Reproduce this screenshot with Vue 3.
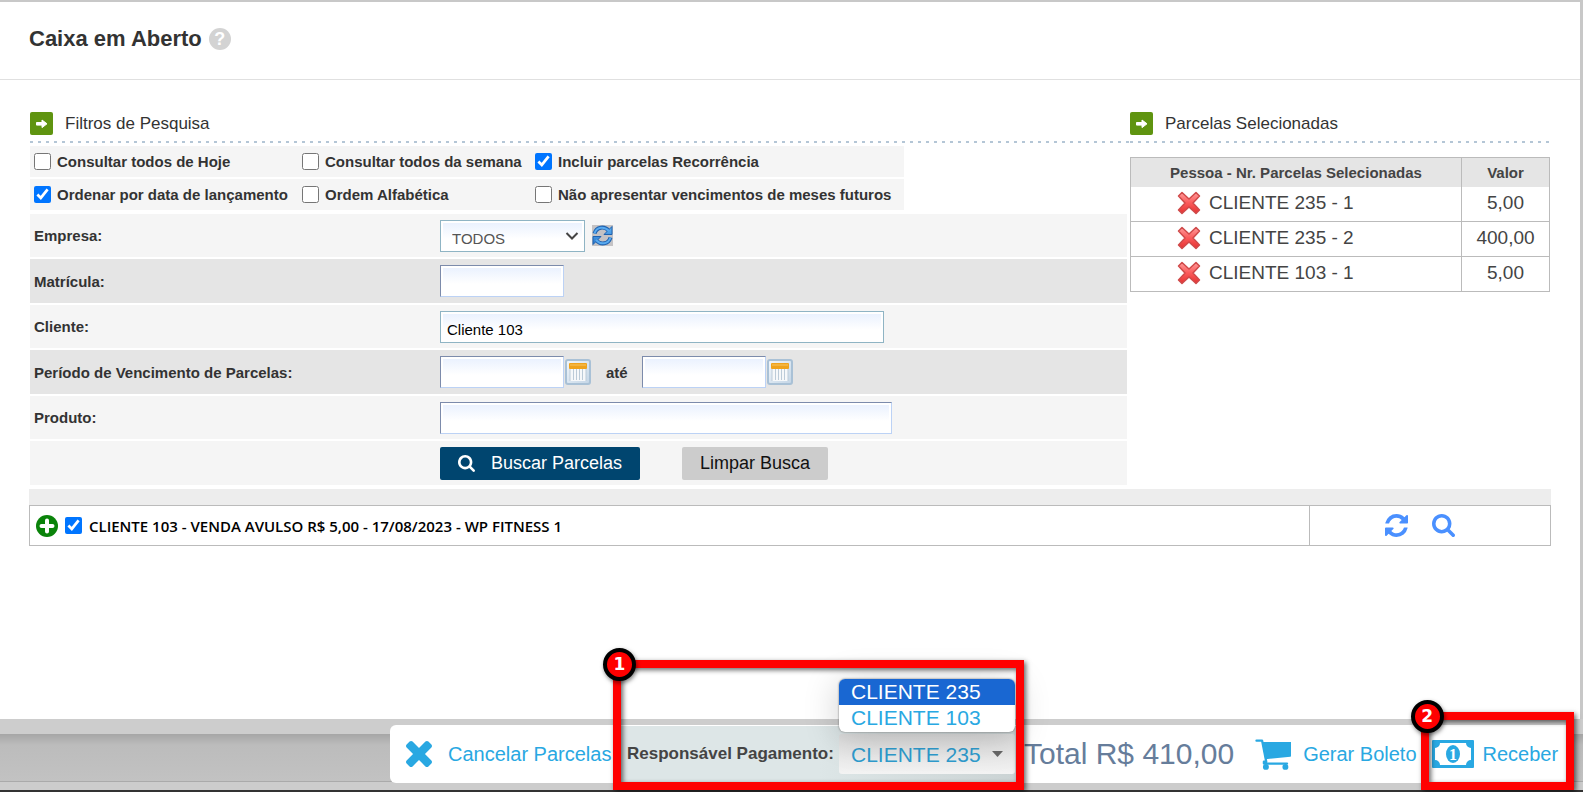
<script setup>
import { ref, reactive, computed } from 'vue'

const opcoes = reactive([
    { id: 'hoje', label: 'Consultar todos de Hoje', checked: false },
    { id: 'semana', label: 'Consultar todos da semana', checked: false },
    { id: 'recorrencia', label: 'Incluir parcelas Recorrência', checked: true },
    { id: 'lancamento', label: 'Ordenar por data de lançamento', checked: true },
    { id: 'alfabetica', label: 'Ordem Alfabética', checked: false },
    { id: 'futuros', label: 'Não apresentar vencimentos de meses futuros', checked: false }
])

const filtros = reactive({
    empresa: 'TODOS',
    matricula: '',
    cliente: 'Cliente 103',
    inicio: '',
    fim: '',
    produto: ''
})

const selecionadas = ref([
    { pessoa: 'CLIENTE 235 - 1', valor: 5 },
    { pessoa: 'CLIENTE 235 - 2', valor: 400 },
    { pessoa: 'CLIENTE 103 - 1', valor: 5 }
])

const parcelaMarcada = ref(true)
const responsaveis = ['CLIENTE 235', 'CLIENTE 103']
const responsavel = ref('CLIENTE 235')

const formatValor = (v) => v.toFixed(2).replace('.', ',')
const total = computed(() => formatValor(selecionadas.value.reduce((soma, p) => soma + p.valor, 0)))

function remover(index) {
    selecionadas.value.splice(index, 1)
}

function limpar() {
    Object.assign(filtros, { empresa: 'TODOS', matricula: '', cliente: '', inicio: '', fim: '', produto: '' })
}
</script>

<template>
    <div class="app">
        <!-- shared icon shapes -->
        <svg class="defs" aria-hidden="true">
            <defs>
                <linearGradient id="red" x1="0" y1="0" x2="0" y2="1">
                    <stop offset="0" stop-color="#ff9a9a" />
                    <stop offset="0.5" stop-color="#fa5a5a" />
                    <stop offset="1" stop-color="#e63232" />
                </linearGradient>
                <linearGradient id="blue" x1="0" y1="0" x2="0" y2="1">
                    <stop offset="0" stop-color="#5fb2f2" />
                    <stop offset="1" stop-color="#2a78cc" />
                </linearGradient>
                <linearGradient id="cal" x1="0" y1="0" x2="1" y2="1">
                    <stop offset="0" stop-color="#f2f7fb" />
                    <stop offset="1" stop-color="#c3d5e6" />
                </linearGradient>
            </defs>
            <symbol id="i-search" viewBox="64 128 1664 1664">
                <path d="M1216 832q0-185-131.500-316.500t-316.500-131.500-316.500 131.500-131.500 316.500 131.500 316.500 316.500 131.500 316.500-131.500 131.500-316.500zM1728 1664q0 52-38 90t-90 38q-54 0-90-38l-343-342q-179 124-399 124-143 0-273.500-55.500t-225-150-150-225-55.500-273.500 55.500-273.500 150-225 225-150 273.500-55.500 273.500 55.500 225 150 150 225 55.500 273.500q0 220-124 399l343 343q37 37 37 90z" />
            </symbol>
            <symbol id="i-refresh" viewBox="128 128 1536 1536">
                <path d="M1639 1056q0 5-1 7-64 268-268 434.500t-478 166.500q-146 0-282.500-55t-243.500-157l-129 129q-19 19-45 19t-45-19-19-45v-448q0-26 19-45t45-19h448q26 0 45 19t19 45-19 45l-137 137q71 66 161 102t187 36q134 0 250-65t186-179q11-17 53-117 8-23 30-23h192q13 0 22.500 9.500t9.500 22.500zM1664 256v448q0 26-19 45t-45 19h-448q-26 0-45-19t-19-45 19-45l138-138q-148-137-349-137-134 0-250 65t-186 179q-11 17-53 117-8 23-30 23h-199q-13 0-22.500-9.500t-9.500-22.500v-7q65-268 270-434.500t480-166.500q146 0 284 55.500t245 156.500l130-129q19-19 45-19t45 19 19 45z" />
            </symbol>
            <symbol id="i-times" viewBox="302 366 1188 1188">
                <path d="M1490 1322q0 40-28 68l-136 136q-28 28-68 28t-68-28l-294-294-294 294q-28 28-68 28t-68-28l-136-136q-28-28-28-68t28-68l294-294-294-294q-28-28-28-68t28-68l136-136q28-28 68-28t68 28l294 294 294-294q28-28 68-28t68 28l136 136q28 28 28 68t-28 68l-294 294 294 294q28 28 28 68z" />
            </symbol>
            <symbol id="i-arrow" viewBox="0 0 23 23">
                <rect width="23" height="23" rx="2" fill="#5f9410" />
                <path d="M6.500 10.500h5.500V8l5 3.800-5 3.800v-2.500H6.500z" fill="#fff" stroke="#fff" stroke-linejoin="round" />
            </symbol>
            <symbol id="i-calendar" viewBox="0 0 26 26">
                <rect x="1" y="1" width="24" height="24" rx="2" fill="url(#cal)" stroke="#a9c1d6" stroke-width="2" />
                <rect x="5" y="9" width="16" height="13" fill="#f6f8fa" />
                <path d="M5 9v13M8.500 10v11M11.500 10v11M14.500 10v11M17.500 10v11M21 9v13" stroke="#bccbd8" />
                <rect x="4" y="4" width="18" height="6" rx="1" fill="#efa31d" />
                <path d="M5 6h16" stroke="#f7c562" />
            </symbol>
        </svg>

        <main class="page">
            <header class="page-header">
                <h1>Caixa em Aberto</h1>
                <button type="button" class="help" aria-label="Ajuda">?</button>
            </header>

            <div class="content">
                <section class="filters">
                    <h2 class="section-title">
                        <svg class="section-icon"><use href="#i-arrow" /></svg>
                        Filtros de Pesquisa
                    </h2>

                    <div class="options">
                        <label v-for="op in opcoes" :key="op.id" class="option">
                            <input v-model="op.checked" type="checkbox">
                            {{ op.label }}
                        </label>
                    </div>

                    <form class="rows" @submit.prevent>
                        <div class="row">
                            <label for="empresa">Empresa:</label>
                            <div class="fields">
                                <div class="select-wrap empresa">
                                    <select id="empresa" v-model="filtros.empresa" class="field">
                                        <option>TODOS</option>
                                    </select>
                                    <svg class="chevron" viewBox="0 0 14 8"><path d="M1.500 1l5.500 5.500L12.500 1" fill="none" stroke="#444" stroke-width="2" /></svg>
                                </div>
                                <button type="button" class="icon-btn reload" aria-label="Atualizar empresas">
                                    <svg viewBox="0 0 21 21">
                                        <rect width="21" height="21" fill="#c4c2c4" />
                                        <path d="M2.500 8.500C4.500 1.500 12.500 1 16.500 5.500M18.500 12.500C16.500 19.500 8.500 20 4.500 15.500" fill="none" stroke="#1f62b0" stroke-width="4" />
                                        <path d="M20 1.500v8h-8zM1 19.500v-8h8z" fill="url(#blue)" stroke="#1f62b0" />
                                        <path d="M2.500 8.500C4.500 1.500 12.500 1 17 6M18.500 12.500C16.500 19.500 8.500 20 4 15" fill="none" stroke="#58aaf0" stroke-width="2" />
                                    </svg>
                                </button>
                            </div>
                        </div>
                        <div class="row dark">
                            <label for="matricula">Matrícula:</label>
                            <div class="fields">
                                <input id="matricula" v-model="filtros.matricula" type="text" class="field small">
                            </div>
                        </div>
                        <div class="row">
                            <label for="cliente">Cliente:</label>
                            <div class="fields">
                                <input id="cliente" v-model="filtros.cliente" type="text" class="field medium framed">
                            </div>
                        </div>
                        <div class="row dark">
                            <label for="inicio">Período de Vencimento de Parcelas:</label>
                            <div class="fields">
                                <input id="inicio" v-model="filtros.inicio" type="text" class="field small">
                                <button type="button" class="icon-btn calendar" aria-label="Data inicial">
                                    <svg><use href="#i-calendar" /></svg>
                                </button>
                                <label for="fim" class="until">até</label>
                                <input id="fim" v-model="filtros.fim" type="text" class="field small">
                                <button type="button" class="icon-btn calendar" aria-label="Data final">
                                    <svg><use href="#i-calendar" /></svg>
                                </button>
                            </div>
                        </div>
                        <div class="row">
                            <label for="produto">Produto:</label>
                            <div class="fields">
                                <input id="produto" v-model="filtros.produto" type="text" class="field large">
                            </div>
                        </div>
                        <div class="row">
                            <div class="fields actions">
                                <button type="submit" class="btn primary">
                                    <svg><use href="#i-search" /></svg>
                                    Buscar Parcelas
                                </button>
                                <button type="button" class="btn" @click="limpar">Limpar Busca</button>
                            </div>
                        </div>
                    </form>
                </section>

                <section class="selected">
                    <h2 class="section-title">
                        <svg class="section-icon"><use href="#i-arrow" /></svg>
                        Parcelas Selecionadas
                    </h2>
                    <table class="selected-table">
                        <thead>
                            <tr>
                                <th>Pessoa - Nr. Parcelas Selecionadas</th>
                                <th class="value">Valor</th>
                            </tr>
                        </thead>
                        <tbody>
                            <tr v-for="(p, i) in selecionadas" :key="p.pessoa">
                                <td>
                                    <div class="person">
                                        <button type="button" class="icon-btn remove" aria-label="Remover" @click="remover(i)">
                                            <svg viewBox="0 0 24 24">
                                                <path d="M5 1.500L12 8l7-6.500L22.500 5 16 12l6.500 7L19 22.500 12 16l-7 6.500L1.500 19 8 12 1.500 5z" fill="url(#red)" stroke="#cf4a4a" stroke-width="1.500" stroke-linejoin="round" />
                                            </svg>
                                        </button>
                                        {{ p.pessoa }}
                                    </div>
                                </td>
                                <td>{{ formatValor(p.valor) }}</td>
                            </tr>
                        </tbody>
                    </table>
                </section>
            </div>

            <section class="results">
                <table class="results-table">
                    <tbody>
                        <tr>
                            <td>
                                <div class="result">
                                    <button type="button" class="icon-btn add" aria-label="Expandir">
                                        <svg viewBox="0 0 22 22">
                                            <circle cx="11" cy="11" r="11" fill="#0a830a" />
                                            <path d="M11 5.500v11M5.500 11h11" stroke="#fff" stroke-width="4" stroke-linecap="round" />
                                        </svg>
                                    </button>
                                    <input id="parcela" v-model="parcelaMarcada" type="checkbox">
                                    <label for="parcela">CLIENTE 103 - VENDA AVULSO R$ 5,00 - 17/08/2023 - WP FITNESS 1</label>
                                </div>
                            </td>
                            <td class="tools-cell">
                                <div class="tools">
                                    <button type="button" class="icon-btn tool" aria-label="Recarregar">
                                        <svg><use href="#i-refresh" /></svg>
                                    </button>
                                    <button type="button" class="icon-btn tool" aria-label="Visualizar">
                                        <svg><use href="#i-search" /></svg>
                                    </button>
                                </div>
                            </td>
                        </tr>
                    </tbody>
                </table>
            </section>
        </main>

        <footer class="footer">
            <div class="toolbar">
                <a href="#cancelar" class="action cancel">
                    <svg><use href="#i-times" /></svg>
                    Cancelar Parcelas
                </a>

                <div class="payer">
                    <label for="responsavel">Responsável Pagamento:</label>
                    <div class="select-wrap payer-select">
                        <select id="responsavel" v-model="responsavel">
                            <option v-for="r in responsaveis" :key="r">{{ r }}</option>
                        </select>
                        <svg class="caret" viewBox="0 0 11 6"><path d="M0 0h11L5.500 6z" fill="#666" /></svg>
                        <ul class="menu">
                            <li v-for="r in responsaveis" :key="r" :class="{ active: r === responsavel }" @click="responsavel = r">{{ r }}</li>
                        </ul>
                    </div>
                    <div class="callout callout-payer"><span class="badge">1</span></div>
                </div>

                <output class="total">Total R$ {{ total }}</output>

                <a href="#boleto" class="action boleto">
                    <svg viewBox="0 0 109 93">
                        <path d="M4.500 4.500h17L34 68H27v6h70" fill="none" stroke="currentColor" stroke-width="7" stroke-linecap="round" stroke-linejoin="round" />
                        <path d="M21 9h88v42q0 2-2 2L31 61z" fill="currentColor" />
                        <circle cx="33" cy="84" r="9" fill="currentColor" />
                        <circle cx="92" cy="84" r="9" fill="currentColor" />
                    </svg>
                    Gerar Boleto
                </a>

                <div class="receive">
                    <a href="#receber" class="action">
                        <svg viewBox="0 0 42 28">
                            <rect width="42" height="28" rx="1" fill="currentColor" />
                            <path d="M8 3h26a5 5 0 0 0 5 5v12a5 5 0 0 0-5 5H8a5 5 0 0 0-5-5V8a5 5 0 0 0 5-5z" fill="#fff" />
                            <ellipse cx="21" cy="14" rx="7" ry="9" fill="currentColor" />
                            <text x="21" y="20" text-anchor="middle" class="note">1</text>
                        </svg>
                        Receber
                    </a>
                    <div class="callout callout-receive"><span class="badge">2</span></div>
                </div>
            </div>
        </footer>
    </div>
</template>

<style>
body {
    margin: 0;
}
</style>

<style scoped>
* {
    box-sizing: border-box;
}

.app {
    display: flex;
    flex-direction: column;
    min-height: 100vh;
    overflow: hidden;
    background: #c8c8c8;
    color: #333;
    font-family: "Liberation Sans", Arial, sans-serif;
    font-size: 15px;
}

.defs {
    position: absolute;
    width: 0;
    height: 0;
}

.page {
    flex: 1;
    margin: 2px 3px 0 0;
    background: #fff;
}

.page-header {
    display: flex;
    align-items: center;
    gap: 7px;
    height: 78px;
    padding: 0 29px 4px;
    border-bottom: 1px solid #e0e0e0;
}

h1 {
    margin: 0;
    font-size: 22px;
    font-weight: bold;
}

.help {
    width: 22px;
    height: 22px;
    padding: 0;
    border: none;
    border-radius: 50%;
    background: #d3d3d3;
    color: #fff;
    font: bold 18px/22px "Liberation Sans", Arial, sans-serif;
}

.content {
    display: grid;
    grid-template-columns: 1fr 420px;
    column-gap: 3px;
    padding: 32px 30px 4px;
}

.section-title {
    display: flex;
    align-items: center;
    gap: 12px;
    height: 31px;
    margin: 0;
    padding-bottom: 8px;
    font-size: 17px;
    font-weight: normal;
    background: repeating-linear-gradient(90deg, #b4c6d6 0 3px, transparent 3px 8px) bottom / 100% 2px no-repeat;
}

.section-icon {
    width: 23px;
    height: 23px;
    flex: none;
}

.options {
    display: grid;
    grid-template-columns: 268px 233px 373px;
    row-gap: 2px;
    width: max-content;
    margin-top: 3px;
    font-weight: bold;
}

.option {
    display: flex;
    align-items: center;
    gap: 6px;
    height: 31px;
    padding-left: 4px;
    background: #f5f5f5;
    white-space: nowrap;
}

input[type="checkbox"] {
    width: 17px;
    height: 17px;
    margin: 0;
    flex: none;
}

.rows {
    display: grid;
    gap: 2px;
    margin-top: 4px;
}

.row {
    display: grid;
    grid-template-columns: 406px 1fr;
    align-items: center;
    height: 43px;
    padding-left: 4px;
    background: #f5f5f5;
    font-weight: bold;
}

.row.dark,
.row:last-child {
    height: 44px;
}

.row.dark {
    background: #e5e5e5;
}

.fields {
    grid-column: 2;
    display: flex;
    align-items: center;
}

.field {
    height: 32px;
    padding: 5px 6px 0;
    border: 1px solid;
    border-color: #7c8bab #bcd2f5 #bcd2f5 #7c8bab;
    border-radius: 0;
    background: linear-gradient(#e8f0fe, #fff 60%);
    box-shadow: inset 0 0 0 2px #fff;
    color: #000;
    font: 15px "Liberation Sans", Arial, sans-serif;
}

.small {
    width: 124px;
}

.medium {
    width: 444px;
}

.large {
    width: 452px;
}

.framed,
.empresa .field {
    border-color: #8fb4c4;
}

.select-wrap {
    position: relative;
    display: grid;
    align-items: center;
}

.select-wrap > * {
    grid-area: 1 / 1;
}

select {
    appearance: none;
    width: 100%;
}

.empresa {
    width: 145px;
}

.empresa .field {
    padding-left: 11px;
    color: #555;
}

.chevron {
    width: 14px;
    height: 8px;
    justify-self: end;
    margin-right: 6px;
    pointer-events: none;
}

.icon-btn {
    display: block;
    padding: 0;
    border: none;
    background: none;
    color: inherit;
    cursor: pointer;
}

.icon-btn svg {
    display: block;
    width: 100%;
    height: 100%;
    fill: currentColor;
}

.reload {
    width: 21px;
    height: 21px;
    margin-left: 7px;
}

.calendar {
    width: 26px;
    height: 26px;
    margin-left: 1px;
}

.until {
    margin: 0 14px 0 15px;
}

.actions {
    gap: 42px;
}

.btn {
    display: flex;
    align-items: center;
    gap: 16px;
    height: 33px;
    padding: 0 18px;
    border: none;
    border-radius: 2px;
    background: #ccc;
    color: #111;
    font: 18px "Liberation Sans", Arial, sans-serif;
}

.btn svg {
    width: 17px;
    height: 17px;
    fill: currentColor;
}

.btn.primary {
    background: #00456f;
    color: #fff;
}

.selected-table,
.results-table {
    width: 100%;
    border-collapse: collapse;
}

.selected-table {
    margin-top: 14px;
    border: 1px solid #bbb;
    color: #444;
    font-size: 19px;
    text-align: center;
}

/* runs the dotted line over the gap between both columns */
.filters .section-title {
    margin-right: -3px;
}

.selected-table th {
    height: 29px;
    padding: 0;
    background: #e5e5e5;
    border-left: 1px solid #bbb;
    font-size: 15px;
}

.selected-table td {
    height: 35px;
    padding: 0 0 2px;
    border: 1px solid #bbb;
    border-top: none;
}

.value {
    width: 88px;
}

.person {
    display: flex;
    align-items: center;
    gap: 8px;
    padding-left: 46px;
}

.remove {
    width: 24px;
    height: 24px;
}

.results {
    margin: 0 29px;
    border-top: 16px solid #ededed;
}

.results-table td {
    height: 40px;
    padding: 0 6px;
    border: 1px solid #bbb;
}

.result {
    display: flex;
    align-items: center;
    gap: 7px;
    color: #000;
    font: 600 15px "Open Sans", "Trebuchet MS", sans-serif;
}

.add {
    width: 22px;
    height: 22px;
}

.results-table .tools-cell {
    width: 241px;
    padding-right: 26px;
}

.tools {
    display: flex;
    justify-content: center;
    gap: 24px;
    color: #4a90ff;
}

.tool {
    width: 23px;
    height: 23px;
}

.footer {
    padding: 6px 12px 7px 390px;
    border-bottom: 2px solid #333;
    background: linear-gradient(#cdcdcd 15px, #a6a6a6 15px, #bcbcbc 26px, #c2c2c2 62px, #aaa 62px, #aaa 63px, #ccc 63px);
}

.toolbar {
    display: flex;
    align-items: center;
    height: 58px;
    padding-left: 16px;
    border-radius: 6px 0 0 6px;
    background: #fff;
    white-space: nowrap;
}

.action {
    display: flex;
    align-items: center;
    color: #29a8e2;
    font-size: 20px;
    text-decoration: none;
}

.action svg {
    fill: currentColor;
    flex: none;
}

.cancel {
    gap: 16px;
    flex: 0 0 215px;
}

.cancel svg {
    width: 26px;
    height: 26px;
}

.payer {
    position: relative;
    display: flex;
    align-items: center;
    flex: 0 0 395px;
    justify-content: space-between;
    height: 56px;
    padding: 0 1px 0 6px;
    background: linear-gradient(90deg, #dde6e7 50%, #cbd3d4);
    color: #444;
    font-size: 17px;
    font-weight: bold;
}

.payer-select {
    width: 176px;
}

.payer-select select {
    height: 40px;
    padding: 0 12px;
    border: none;
    border-radius: 3px;
    background: linear-gradient(#dcdcdc, #f3f3f3);
    color: #2e9bcd;
    font: 21px "Liberation Sans", Arial, sans-serif;
}

.caret {
    width: 11px;
    height: 6px;
    justify-self: end;
    margin-right: 12px;
    pointer-events: none;
}

.menu {
    position: absolute;
    left: 0;
    right: 0;
    bottom: 42px;
    margin: 0;
    padding: 0 0 1px;
    overflow: hidden;
    border-radius: 6px;
    background: #fff;
    box-shadow: 0 0 2px #666, 0 4px 36px rgba(0, 0, 0, 0.2);
    list-style: none;
    color: #29a8e2;
    font-size: 21px;
    font-weight: normal;
}

.menu li {
    height: 26px;
    padding-left: 12px;
    line-height: 25px;
}

.menu .active {
    background: #1967d2;
    color: #fff;
}

.total {
    margin-left: 8px;
    color: #667d9b;
    font-size: 30px;
}

.boleto {
    gap: 12px;
    margin-left: 21px;
}

.boleto svg {
    width: 36px;
    height: 31px;
}

.receive {
    position: relative;
    display: flex;
    align-items: center;
    flex: 1;
    height: 56px;
    margin-left: 12px;
    margin-right: 5px;
    padding-left: 3px;
}

.receive .action {
    gap: 9px;
}

.receive svg {
    width: 42px;
    height: 28px;
}

.note {
    fill: #fff;
    font: bold 16px "Liberation Serif", serif;
}

.callout {
    position: absolute;
    left: -8px;
    right: -8px;
    bottom: -8px;
    border: 8px solid #f00;
    box-shadow: 2px 2px 5px rgba(0, 0, 0, 0.6), inset 2px 2px 5px rgba(0, 0, 0, 0.6);
    pointer-events: none;
    z-index: 2;
}

.callout-payer {
    top: -66px;
}

.callout-receive {
    top: -14px;
}

.badge {
    position: absolute;
    left: -18px;
    top: -20px;
    width: 33px;
    height: 33px;
    border: 4px solid #000;
    border-radius: 50%;
    background: #f00;
    box-shadow: 1px 2px 4px rgba(0, 0, 0, 0.5);
    color: #fff;
    font: bold 17px/25px "DejaVu Sans", sans-serif;
    text-align: center;
}
</style>
